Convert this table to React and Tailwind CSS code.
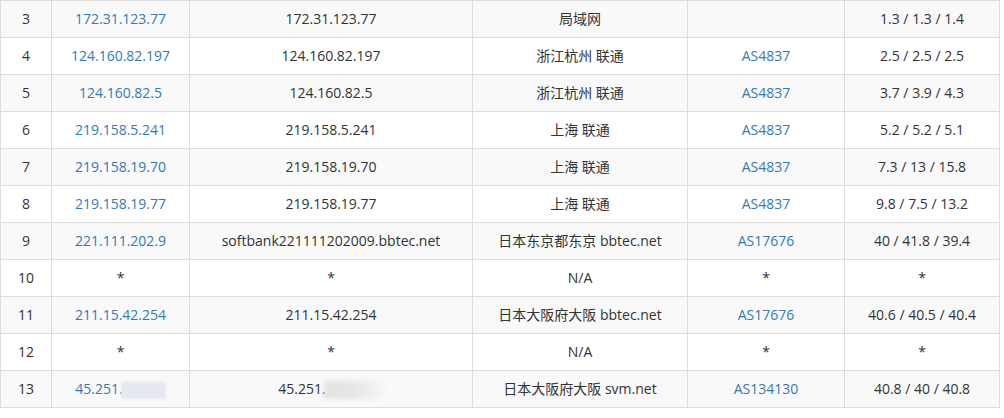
import React from "react";

const rows = [
  { n: 3, ip: "172.31.123.77", host: "172.31.123.77", loc: "局域网", as: "", rtt: "1.3 / 1.3 / 1.4" },
  { n: 4, ip: "124.160.82.197", host: "124.160.82.197", loc: "浙江杭州 联通", as: "AS4837", rtt: "2.5 / 2.5 / 2.5" },
  { n: 5, ip: "124.160.82.5", host: "124.160.82.5", loc: "浙江杭州 联通", as: "AS4837", rtt: "3.7 / 3.9 / 4.3" },
  { n: 6, ip: "219.158.5.241", host: "219.158.5.241", loc: "上海 联通", as: "AS4837", rtt: "5.2 / 5.2 / 5.1" },
  { n: 7, ip: "219.158.19.70", host: "219.158.19.70", loc: "上海 联通", as: "AS4837", rtt: "7.3 / 13 / 15.8" },
  { n: 8, ip: "219.158.19.77", host: "219.158.19.77", loc: "上海 联通", as: "AS4837", rtt: "9.8 / 7.5 / 13.2" },
  { n: 9, ip: "221.111.202.9", host: "softbank221111202009.bbtec.net", loc: "日本东京都东京 bbtec.net", as: "AS17676", rtt: "40 / 41.8 / 39.4" },
  { n: 10, ip: "*", host: "*", loc: "N/A", as: "*", rtt: "*", star: true },
  { n: 11, ip: "211.15.42.254", host: "211.15.42.254", loc: "日本大阪府大阪 bbtec.net", as: "AS17676", rtt: "40.6 / 40.5 / 40.4" },
  { n: 12, ip: "*", host: "*", loc: "N/A", as: "*", rtt: "*", star: true },
  { n: 13, ip: "45.251.", host: "45.251.", loc: "日本大阪府大阪 svm.net", as: "AS134130", rtt: "40.8 / 40 / 40.8", masked: true },
];

const td = "border border-[#dddddd] px-2 py-2 text-center leading-[20px] whitespace-nowrap";

export default function App() {
  return (
    <div className="bg-white w-[1004px] h-[418px] overflow-hidden" style={{ fontFamily: '"Open Sans", "Noto Sans CJK SC", sans-serif' }}>
      <table className="table-fixed border-collapse w-[999px] text-[14px] text-[#333333]">
        <colgroup>
          <col className="w-[51px]" />
          <col className="w-[138px]" />
          <col className="w-[283px]" />
          <col className="w-[215px]" />
          <col className="w-[157px]" />
          <col className="w-[155px]" />
        </colgroup>
        <tbody>
          {rows.map((r) => (
            <tr key={r.n} className={r.n % 2 === 1 ? "bg-[#f9f9f9]" : "bg-white"}>
              <td className={td}>{r.n}</td>
              <td className={`${td} ${r.star ? "text-[#333333]" : "text-[#337ab7]"}`}>
                {r.ip}
                {r.masked && (
                  <span className="inline-block align-middle w-[45px] h-[17px] -ml-[2px] bg-[#e4e8ef] blur-[1px]" />
                )}
              </td>
              <td className={td}>
                {r.host}
                {r.masked && (
                  <span className="inline-block align-middle w-[60px] h-[18px] -ml-[2px] bg-gradient-to-r from-[#e2e2e2] via-[#e6e6e6] to-[#f6f6f6] blur-[2px]" />
                )}
              </td>
              <td className={td}>{r.loc}</td>
              <td className={`${td} ${r.star ? "text-[#333333]" : "text-[#337ab7]"}`}>{r.as}</td>
              <td className={td}>{r.rtt}</td>
            </tr>
          ))}
        </tbody>
      </table>
    </div>
  );
}
